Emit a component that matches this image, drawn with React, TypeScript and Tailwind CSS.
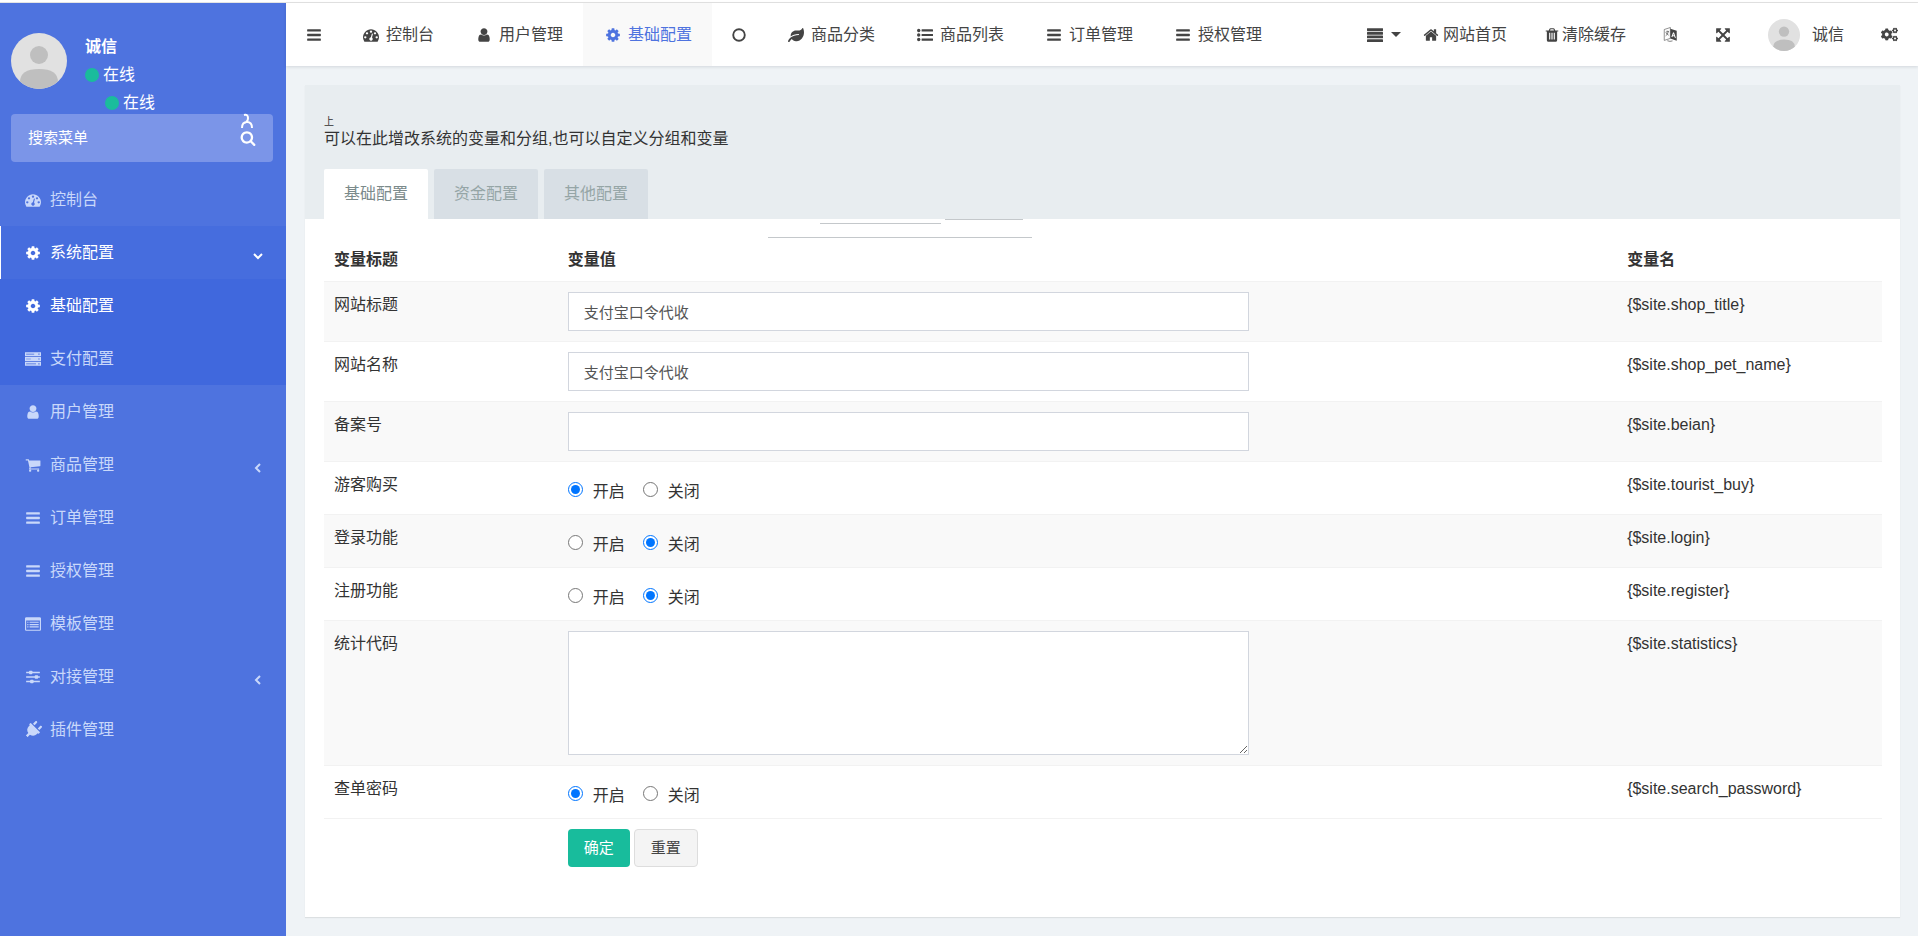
import { type FC, type ReactNode, useState } from "react";
import { FaCogs, FaLeaf, FaPlug } from "react-icons/fa";
import clsx from "clsx";

interface IconProps {
  className?: string;
}

interface GlyphProps extends IconProps {
  children: ReactNode;
}

const Glyph: FC<GlyphProps> = ({ className = "size-4", children }) => (
  <svg viewBox="0 0 1792 1792" fill="currentColor" className={clsx("shrink-0", className)} aria-hidden="true">
    {children}
  </svg>
);

const DashboardIcon: FC<IconProps> = ({ className }) => (
  <Glyph className={className}>
    <path d="M384 1152q0-53-37.5-90.5t-90.5-37.5-90.5 37.5-37.5 90.5 37.5 90.5 90.5 37.5 90.5-37.5 37.5-90.5zm192-448q0-53-37.5-90.5t-90.5-37.5-90.5 37.5-37.5 90.5 37.5 90.5 90.5 37.5 90.5-37.5 37.5-90.5zm428 481l101-382q6-26-7.5-48.5t-38.5-29.5-48 6.5-30 39.5l-101 382q-60 5-107 43.5t-63 98.5q-20 77 20 146t117 89 146-20 89-117q16-60-6-117t-72-91zm660-33q0-53-37.5-90.5t-90.5-37.5-90.5 37.5-37.5 90.5 37.5 90.5 90.5 37.5 90.5-37.5 37.5-90.5zm-640-640q0-53-37.5-90.5t-90.5-37.5-90.5 37.5-37.5 90.5 37.5 90.5 90.5 37.5 90.5-37.5 37.5-90.5zm448 192q0-53-37.5-90.5t-90.5-37.5-90.5 37.5-37.5 90.5 37.5 90.5 90.5 37.5 90.5-37.5 37.5-90.5zm320 448q0 261-141 483-19 29-54 29h-1402q-35 0-54-29-141-221-141-483 0-182 71-348t191-286 286-191 348-71 348 71 286 191 191 286 71 348z" />
  </Glyph>
);

const CogIcon: FC<IconProps> = ({ className }) => (
  <Glyph className={className}>
    <path d="M1152 896q0-106-75-181t-181-75-181 75-75 181 75 181 181 75 181-75 75-181zm512-109v222q0 12-8 23t-20 13l-185 28q-19 54-39 91 35 50 107 138 10 12 10 25t-9 23q-27 37-99 108t-94 71q-12 0-26-9l-138-108q-44 23-91 38-16 136-29 186-7 28-36 28h-222q-14 0-24.5-8.5t-11.5-21.5l-28-184q-49-16-90-37l-141 107q-10 9-25 9-14 0-25-11-126-114-165-168-7-10-7-23 0-12 8-23 15-21 51-66.5t54-70.5q-27-50-41-99l-183-27q-13-2-21-12.5t-8-23.5v-222q0-12 8-23t19-13l186-28q14-46 39-92-40-57-107-138-10-12-10-24 0-10 9-23 26-36 98.5-107.5t94.5-71.5q13 0 26 10l138 107q44-23 91-38 16-136 29-186 7-28 36-28h222q14 0 24.5 8.5t11.5 21.5l28 184q49 16 90 37l142-107q9-9 24-9 13 0 25 10 129 119 165 170 7 8 7 22 0 12-8 23-15 21-51 66.5t-54 70.5q26 50 41 98l183 28q13 2 21 12.5t8 23.5z" />
  </Glyph>
);

const UserIcon: FC<IconProps> = ({ className }) => (
  <Glyph className={className}>
    <path d="M1536 1399q0 109-62.5 187t-150.5 78h-854q-88 0-150.5-78t-62.5-187q0-85 8.5-160.5t31.5-152 58.5-131 94-89 134.5-34.5q131 128 313 128t313-128q76 0 134.5 34.5t94 89 58.5 131 31.5 152 8.5 160.5zm-256-887q0 159-112.5 271.5t-271.5 112.5-271.5-112.5-112.5-271.5 112.5-271.5 271.5-112.5 271.5 112.5 112.5 271.5z" />
  </Glyph>
);

const BarsIcon: FC<IconProps> = ({ className }) => (
  <Glyph className={className}>
    <rect x="128" y="256" width="1536" height="256" rx="64" />
    <rect x="128" y="768" width="1536" height="256" rx="64" />
    <rect x="128" y="1280" width="1536" height="256" rx="64" />
  </Glyph>
);

const JustifyIcon: FC<IconProps> = ({ className }) => (
  <Glyph className={className}>
    <rect y="128" width="1792" height="310" rx="40" />
    <rect y="544" width="1792" height="310" rx="40" />
    <rect y="960" width="1792" height="310" rx="40" />
    <rect y="1376" width="1792" height="310" rx="40" />
  </Glyph>
);

const ListIcon: FC<IconProps> = ({ className }) => (
  <Glyph className={className}>
    <circle cx="192" cy="384" r="192" />
    <circle cx="192" cy="896" r="192" />
    <circle cx="192" cy="1408" r="192" />
    <rect x="512" y="264" width="1280" height="240" rx="32" />
    <rect x="512" y="776" width="1280" height="240" rx="32" />
    <rect x="512" y="1288" width="1280" height="240" rx="32" />
  </Glyph>
);

const CircleIcon: FC<IconProps> = ({ className }) => (
  <Glyph className={className}>
    <circle cx="896" cy="896" r="740" fill="none" stroke="currentColor" strokeWidth="240" />
  </Glyph>
);

const ServerIcon: FC<IconProps> = ({ className }) => (
  <Glyph className={className}>
    <path
      fillRule="evenodd"
      d="M0 128h1792v448H0zM0 672h1792v448H0zM0 1216h1792v448H0zM128 320v64h900v-64zM128 864v64h520v-64zM128 1408v64h1100v-64zM1500 288v128h128V288zM1500 832v128h128V832zM1500 1376v128h128v-128z"
    />
  </Glyph>
);

const CartIcon: FC<IconProps> = ({ className }) => (
  <Glyph className={className}>
    <path d="M704 1536q0 52-38 90t-90 38-90-38-38-90 38-90 90-38 90 38 38 90zm896 0q0 52-38 90t-90 38-90-38-38-90 38-90 90-38 90 38 38 90zm128-1088v512q0 24-16.5 42.5t-40.5 21.5l-1044 122q13 60 13 70 0 16-24 64h920q26 0 45 19t19 45-19 45-45 19h-1024q-26 0-45-19t-19-45q0-11 8-31.5t16-36 21.5-40 15.5-29.5l-177-823h-204q-26 0-45-19t-19-45 19-45 45-19h256q16 0 28.5 6.5t19.5 15.5 13 24.5 8 26 5.5 29.5 4.5 26h1201q26 0 45 19t19 45z" />
  </Glyph>
);

const TemplateIcon: FC<IconProps> = ({ className }) => (
  <Glyph className={className}>
    <path
      fillRule="evenodd"
      d="M160 128h1472q66 0 113 47t47 113v1216q0 66-47 113t-113 47H160q-66 0-113-47t-47-113V288q0-66 47-113t113-47zM128 512v992q0 32 32 32h1472q32 0 32-32V512z"
    />
    <path d="M256 640h128v128H256zM256 896h128v128H256zM256 1152h128v128H256zM512 640h1024v128H512zM512 896h1024v128H512zM512 1152h1024v128H512z" />
  </Glyph>
);

const SlidersIcon: FC<IconProps> = ({ className }) => (
  <Glyph className={className}>
    <path d="M128 300h1536v168H128zM128 812h1536v168H128zM128 1324h1536v168H128z" />
    <rect x="448" y="192" width="384" height="384" rx="90" />
    <rect x="1088" y="704" width="384" height="384" rx="90" />
    <rect x="576" y="1216" width="384" height="384" rx="90" />
  </Glyph>
);

const SearchIcon: FC<IconProps> = ({ className }) => (
  <Glyph className={className}>
    <path d="M1216 832q0-185-131.5-316.5t-316.5-131.5-316.5 131.5-131.5 316.5 131.5 316.5 316.5 131.5 316.5-131.5 131.5-316.5zm512 832q0 52-38 90t-90 38q-54 0-90-38l-343-342q-179 124-399 124-143 0-273.5-55.5t-225-150-150-225-55.5-273.5 55.5-273.5 150-225 225-150 273.5-55.5 273.5 55.5 225 150 150 225 55.5 273.5q0 220-124 399l343 343q37 37 37 90z" />
  </Glyph>
);

const HomeIcon: FC<IconProps> = ({ className }) => (
  <Glyph className={className}>
    <path d="M1472 992v480q0 26-19 45t-45 19h-384v-384h-256v384h-384q-26 0-45-19t-19-45v-480q0-1 .5-3t.5-3l575-474 575 474q1 2 1 6zm223-69l-62 74q-8 9-21 11h-3q-13 0-21-7l-692-577-692 577q-12 8-24 7-13-2-21-11l-62-74q-8-10-7-23.5t11-21.5l719-599q32-26 76-26t76 26l244 204v-195q0-14 9-23t23-9h192q14 0 23 9t9 23v408l219 182q10 8 11 21.5t-7 23.5z" />
  </Glyph>
);

const TrashIcon: FC<IconProps> = ({ className }) => (
  <Glyph className={className}>
    <path d="M704 1376v-704q0-14-9-23t-23-9h-64q-14 0-23 9t-9 23v704q0 14 9 23t23 9h64q14 0 23-9t9-23zm256 0v-704q0-14-9-23t-23-9h-64q-14 0-23 9t-9 23v704q0 14 9 23t23 9h64q14 0 23-9t9-23zm256 0v-704q0-14-9-23t-23-9h-64q-14 0-23 9t-9 23v704q0 14 9 23t23 9h64q14 0 23-9t9-23zm-544-992h448l-48-117q-7-9-17-11h-317q-10 2-17 11zm928 32v64q0 14-9 23t-23 9h-96v948q0 83-47 143.5t-113 60.5h-832q-66 0-113-58.5t-47-141.5v-952h-96q-14 0-23-9t-9-23v-64q0-14 9-23t23-9h309l70-167q15-37 54-63t79-26h320q40 0 79 26t54 63l70 167h309q14 0 23 9t9 23z" />
  </Glyph>
);

const LanguageIcon: FC<IconProps> = ({ className }) => (
  <Glyph className={className}>
    <path d="M150 300L880 60v1300L150 1600z" fill="none" stroke="currentColor" strokeWidth="70" />
    <path
      d="M300 640l420-130M500 430v130M640 560q-70 330-330 500M380 720q120 200 300 260"
      fill="none"
      stroke="currentColor"
      strokeWidth="80"
    />
    <path
      fillRule="evenodd"
      d="M880 200l760 250v1180l-760-260zM1210 640l-210 530 120 40 50-140 200 70 50 150 130 45-220-650zM1270 800l60 220-120-40z"
    />
    <path d="M520 1640q300 140 620 20" fill="none" stroke="currentColor" strokeWidth="80" />
  </Glyph>
);

const ExpandIcon: FC<IconProps> = ({ className }) => (
  <Glyph className={className}>
    <path d="M1411 541l-355 355 355 355 144-144q29-31 70-14 39 17 39 59v448q0 26-19 45t-45 19h-448q-42 0-59-40-17-39 14-69l144-144-355-355-355 355 144 144q31 30 14 69-17 40-59 40h-448q-26 0-45-19t-19-45v-448q0-42 40-59 39-17 69 14l144 144 355-355-355-355-144 144q-19 19-45 19-12 0-24-5-40-17-40-59v-448q0-26 19-45t45-19h448q42 0 59 40 17 39-14 69l-144 144 355 355 355-355-144-144q-31-30-14-69 17-40 59-40h448q26 0 45 19t19 45v448q0 42-39 59-13 5-25 5-26 0-45-19z" />
  </Glyph>
);

const AngleIcon: FC<IconProps> = ({ className }) => (
  <svg viewBox="0 0 12 12" fill="none" stroke="currentColor" strokeWidth="2" className={clsx("size-3", className)} aria-hidden="true">
    <path d="M8 2L4 6l4 4" />
  </svg>
);

const Avatar: FC<IconProps> = ({ className }) => (
  <svg viewBox="0 0 56 56" className={clsx("shrink-0 rounded-full", className)} aria-hidden="true">
    <rect width="56" height="56" fill="#e1e1e1" />
    <circle cx="28" cy="22" r="9" fill="#bfbfbf" />
    <path d="M9 49q0-13 19-13t19 13v7H9z" fill="#bfbfbf" />
  </svg>
);

type MenuItem = {
  label: string;
  icon: ReactNode;
  hasChildren?: boolean;
};

const menuList: MenuItem[] = [
  { label: "用户管理", icon: <UserIcon /> },
  { label: "商品管理", icon: <CartIcon />, hasChildren: true },
  { label: "订单管理", icon: <BarsIcon /> },
  { label: "授权管理", icon: <BarsIcon /> },
  { label: "模板管理", icon: <TemplateIcon /> },
  { label: "对接管理", icon: <SlidersIcon />, hasChildren: true },
  { label: "插件管理", icon: <FaPlug className="size-[18px] rotate-45" /> },
];

const navList: MenuItem[] = [
  { label: "控制台", icon: <DashboardIcon /> },
  { label: "用户管理", icon: <UserIcon /> },
  { label: "基础配置", icon: <CogIcon /> },
  { label: "", icon: <CircleIcon className="size-3.5" /> },
  { label: "商品分类", icon: <FaLeaf className="size-4" /> },
  { label: "商品列表", icon: <ListIcon /> },
  { label: "订单管理", icon: <BarsIcon /> },
  { label: "授权管理", icon: <BarsIcon /> },
];

type Field = {
  title: string;
  name: string;
  type: "text" | "radio" | "textarea";
  value: string;
};

const fieldList: Field[] = [
  { title: "网站标题", name: "shop_title", type: "text", value: "支付宝口令代收" },
  { title: "网站名称", name: "shop_pet_name", type: "text", value: "支付宝口令代收" },
  { title: "备案号", name: "beian", type: "text", value: "" },
  { title: "游客购买", name: "tourist_buy", type: "radio", value: "1" },
  { title: "登录功能", name: "login", type: "radio", value: "0" },
  { title: "注册功能", name: "register", type: "radio", value: "0" },
  { title: "统计代码", name: "statistics", type: "textarea", value: "" },
  { title: "查单密码", name: "search_password", type: "radio", value: "1" },
];

const tabList = ["基础配置", "资金配置", "其他配置"];

interface SideLinkProps extends MenuItem {
  className?: string;
  isOpen?: boolean;
}

const SideLink: FC<SideLinkProps> = ({ label, icon, hasChildren, className, isOpen }) => (
  <a href="#" className={clsx("flex h-[53px] items-center pr-5 pl-[22px]", className)}>
    <span className="flex w-[22px] justify-center">{icon}</span>
    <span className="ml-1.5 flex-1">{label}</span>
    {hasChildren && <AngleIcon className={clsx("mt-1.5 mr-0.5", isOpen && "-rotate-90")} />}
  </a>
);

const Online: FC<IconProps> = ({ className }) => (
  <p className={clsx("flex items-center gap-1 leading-7", className)}>
    <span className="size-3.5 rounded-full bg-[#1abc9c]" />
    在线
  </p>
);

const Sidebar: FC = () => (
  <aside className="w-[286px] shrink-0 bg-[#4e73df] text-[#c9d8fa]">
    <div className="flex h-[111px] gap-[18px] px-[11px] pt-[30px] text-white">
      <Avatar className="size-14" />
      <div>
        <p className="leading-7 font-bold">诚信</p>
        <Online />
        <Online className="ml-5" />
      </div>
    </div>
    <form className="mr-[13px] ml-[11px] flex h-12 items-center rounded-sm bg-[#7b95e8] px-[17px] text-white">
      <input
        type="text"
        aria-label="搜索菜单"
        placeholder="搜索菜单"
        className="min-w-0 flex-1 bg-transparent text-[15px] outline-none placeholder:text-white"
      />
      <button type="button" aria-label="搜索" className="relative">
        <SearchIcon />
        <svg viewBox="0 0 14 17" fill="none" stroke="currentColor" strokeWidth="2" className="absolute bottom-4 left-0 h-[17px] w-3.5" aria-hidden="true">
          <path d="M4 2q4-1 4 3t-4 5M2 15q0-6 5-6t5 6" />
        </svg>
      </button>
    </form>
    <nav className="mt-[11px]">
      <SideLink label="控制台" icon={<DashboardIcon />} />
      <SideLink
        label="系统配置"
        icon={<CogIcon />}
        hasChildren
        isOpen
        className="bg-[#466dde] text-white shadow-[inset_1px_0_0_#fff]"
      />
      <div className="bg-[#4068dd]">
        <SideLink label="基础配置" icon={<CogIcon />} className="text-white" />
        <SideLink label="支付配置" icon={<ServerIcon />} />
      </div>
      {menuList.map((elm) => (
        <SideLink key={elm.label} {...elm} />
      ))}
    </nav>
  </aside>
);

const Header: FC = () => (
  <header className="flex h-[63px] items-stretch justify-between bg-white text-[#444] shadow-[0_1px_3px_rgba(0,21,41,0.12)]">
    <div className="flex items-stretch">
      <button type="button" aria-label="菜单" className="pr-[19px] pl-5">
        <BarsIcon />
      </button>
      <nav className="flex items-stretch">
        {navList.map((elm, index) => (
          <a
            key={index}
            href="#"
            aria-label={elm.label || "标签"}
            className={clsx("flex items-center gap-[5px] px-5", index === 2 && "bg-[#f9f9f9] text-[#4e73df]")}
          >
            {elm.label ? (
              <>
                <span className="flex w-5 justify-center">{elm.icon}</span>
                {elm.label}
              </>
            ) : (
              elm.icon
            )}
          </a>
        ))}
      </nav>
    </div>
    <div className="flex items-center gap-[37px] pr-5">
      <div className="flex items-center gap-[22px]">
        <button type="button" aria-label="更多" className="flex items-center gap-2">
          <JustifyIcon />
          <span className="border-x-5 border-t-5 border-x-transparent border-t-current" />
        </button>
        <a href="#" className="flex items-center gap-1">
          <HomeIcon />
          网站首页
        </a>
      </div>
      <a href="#" className="flex items-center gap-0.5">
        <TrashIcon />
        清除缓存
      </a>
      <button type="button" aria-label="语言">
        <LanguageIcon className="size-[15px]" />
      </button>
      <button type="button" aria-label="全屏">
        <ExpandIcon />
      </button>
      <a href="#" className="flex items-center gap-3">
        <Avatar className="size-8" />
        诚信
      </a>
      <button type="button" aria-label="设置">
        <FaCogs className="size-[17px]" />
      </button>
    </div>
  </header>
);

const FieldControl: FC<{ field: Field }> = ({ field }) => {
  const [value, setValue] = useState(field.value);
  const boxStyle = "block w-[65.5%] border border-[#d2d6de] bg-white px-[15px] text-[15px] text-[#555]";

  if (field.type === "text") {
    return (
      <input
        type="text"
        id={field.name}
        value={value}
        onChange={(e) => setValue(e.target.value)}
        className={clsx(boxStyle, "h-[39px]")}
      />
    );
  }

  if (field.type === "textarea") {
    return (
      <textarea
        id={field.name}
        value={value}
        onChange={(e) => setValue(e.target.value)}
        className={clsx(boxStyle, "h-[124px] resize-y py-2")}
      />
    );
  }

  return (
    <div role="radiogroup" aria-label={field.title} className="flex gap-[18px] pt-2">
      {[
        { label: "开启", key: "1" },
        { label: "关闭", key: "0" },
      ].map((elm) => (
        <label key={elm.key} className="flex items-start gap-2.5">
          <input
            type="radio"
            name={field.name}
            checked={value === elm.key}
            onChange={() => setValue(elm.key)}
            className="mt-0.5 size-[15px] accent-[#0075ff]"
          />
          {elm.label}
        </label>
      ))}
    </div>
  );
};

const ConfigPanel: FC = () => {
  const [tab, setTab] = useState(tabList[0]);

  return (
    <section className="bg-white shadow-[0_1px_1px_rgba(0,0,0,0.08)]">
      <div className="bg-[#e8edf0] px-[19px] pt-8 text-[#333]">
        <p className="text-[10px] leading-[10px]">上</p>
        <p>可以在此增改系统的变量和分组,也可以自定义分组和变量</p>
        <div className="mt-[18px] flex gap-1.5">
          {tabList.map((elm) => (
            <button
              key={elm}
              type="button"
              onClick={() => setTab(elm)}
              className={clsx(
                "h-[50px] rounded-t-xs px-5",
                elm === tab ? "bg-white text-[#7b8a8b]" : "bg-[#d8dfe5] text-[#95a5a6]",
              )}
            >
              {elm}
            </button>
          ))}
        </div>
      </div>

      <form className="relative pt-[18px] pr-[18px] pb-10 pl-[19px]">
        <svg
          viewBox="0 0 270 20"
          fill="none"
          stroke="#c4c8cb"
          className="pointer-events-none absolute top-0 left-[28.8%] h-5 w-[270px]"
          aria-hidden="true"
        >
          <path d="M181 .5h78M56 4.5h121M4 18.5h264" />
        </svg>
        <table className="w-full table-fixed text-left text-[#333]">
          <thead>
            <tr>
              <th className="w-[15%] px-2.5 pt-[11px] pb-[9px]">变量标题</th>
              <th className="w-[68%] px-2.5 pt-[11px] pb-[9px]">变量值</th>
              <th className="w-[17%] px-2.5 pt-[11px] pb-[9px]">变量名</th>
            </tr>
          </thead>
          <tbody>
            {fieldList.map((field) => (
              <tr key={field.name} className="border-t border-[#f2f2f2] align-top odd:bg-[#f9f9f9]">
                <td className="px-2.5 pt-[11px]">
                  {field.type === "radio" ? field.title : <label htmlFor={field.name}>{field.title}</label>}
                </td>
                <td className="px-2.5 py-2.5">
                  <FieldControl field={field} />
                </td>
                <td className="px-2.5 pt-[11px]">{`{$site.${field.name}}`}</td>
              </tr>
            ))}
          </tbody>
          <tfoot>
            <tr className="border-t border-[#f2f2f2]">
              <td />
              <td className="px-2.5 py-2.5">
                <div className="flex gap-1 text-[15px]">
                  <button type="submit" className="h-[38px] rounded-sm bg-[#18bc9c] px-4 text-white">
                    确定
                  </button>
                  <button type="reset" className="h-[38px] rounded-sm border border-[#ddd] bg-[#f4f4f4] px-4 text-[#444]">
                    重置
                  </button>
                </div>
              </td>
              <td />
            </tr>
          </tfoot>
        </table>
      </form>
    </section>
  );
};

const App: FC = () => (
  <div className="flex min-h-screen flex-col bg-white font-['Liberation_Sans','Noto_Sans_CJK_SC',sans-serif] text-base">
    <div className="h-[3px] border-b border-[#e4e4e4]" />
    <div className="flex flex-1">
      <Sidebar />
      <div className="min-w-0 flex-1 bg-[#eff3f6]">
        <Header />
        <main className="py-[19px] pr-[18px] pl-[19px]">
          <ConfigPanel />
        </main>
      </div>
    </div>
  </div>
);

export default App;
